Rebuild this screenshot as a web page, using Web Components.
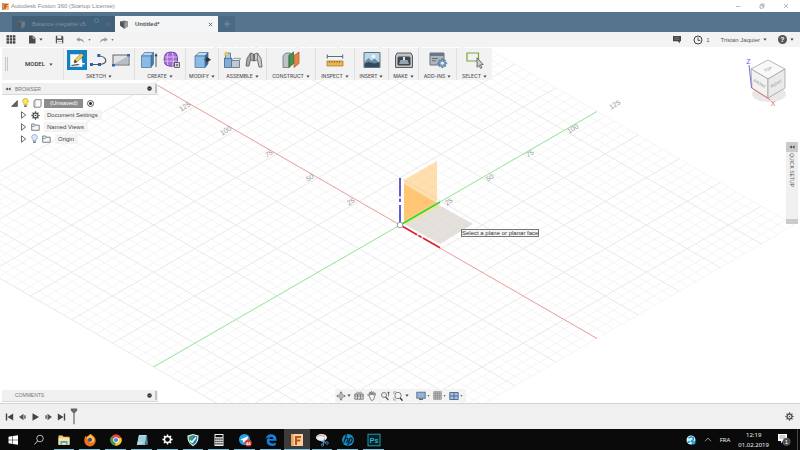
<!DOCTYPE html>
<html lang="en">
<head>
<meta charset="utf-8">
<title>Autodesk Fusion 360 (Startup License)</title>
<style>
  html, body { margin: 0; height: 100%; }
  body { font-family: "Liberation Sans", Arial, sans-serif; font-size: 6px; line-height: 8px; color: #444; background: #fff; }
</style>
</head>
<body>
<fusion-app></fusion-app>
<script>
const BASE = `
  :host { display: block; box-sizing: border-box; }
  *, *::before, *::after { box-sizing: border-box; }
  button { all: unset; box-sizing: border-box; display: inline-flex; align-items: center; justify-content: center; cursor: pointer; }
  ul { list-style: none; margin: 0; padding: 0; }
`;
function define(name, css, html, setup) {
  const template = document.createElement('template');
  template.innerHTML = `<style>${BASE}${css}</style>${html}`;
  customElements.define(name, class extends HTMLElement {
    constructor() {
      super();
      this.attachShadow({ mode: 'open' }).append(template.content.cloneNode(true));
    }
    connectedCallback() { if (setup) setup.call(this, this.shadowRoot); }
  });
}

/* name: [width, height, markup] */
const gearPath = (() => {
  let d = '';
  for (let i = 0; i < 16; i++) {
    const r = i % 2 ? 4 : 5.6;
    for (const o of [-0.13, 0.13]) {
      const a = i * Math.PI / 8 + o;
      d += (d ? 'L' : 'M') + (6 + r * Math.cos(a)).toFixed(2) + ' ' + (6 + r * Math.sin(a)).toFixed(2);
    }
  }
  return d + 'Z';
})();
const ICONS = {
  fusion: [8, 8, '<rect width="8" height="8" rx=".6" fill="#f7c08a"/><path d="M0 0h2v8H0z" fill="#d8833c"/><path d="M2.600 1.200h4v1.300H4.200v1.100h2v1.200h-2V7H2.600z" fill="#b4500c"/>'],
  caret: [4, 3, '<path d="M.4.4h3.200L2 2.800z" fill="#444"/>'],
  min: [6, 6, '<path d="M1 3.500h4" stroke="#999" stroke-width=".7"/>'],
  restore: [6, 6, '<path d="M1 2.200h3v3H1zM2 2.200V1h3v3H4" fill="none" stroke="#888" stroke-width=".6"/>'],
  close: [6, 6, '<path d="M1 1l4 4M5 1L1 5" stroke="#888" stroke-width=".6"/>'],
  tabclose: [6, 6, '<path d="M1 1l4 4M5 1L1 5" stroke="currentColor" stroke-width="1"/>'],
  plus: [6, 6, '<path d="M3 0v6M0 3h6" stroke="#7f93a4" stroke-width=".9"/>'],
  doc3d: [10, 9, '<path d="M1 1.500L5 .4l4 1v4.800L5.400 8.800 1 5.400z" fill="#777"/><path d="M1 1.500l4.400 1v6.200L1 5.500z" fill="#555"/><path d="M5.400 2.500L9 1.400v4.800L5.400 8.700z" fill="#999"/>'],
  grid: [10, 9, [0, 1, 2].flatMap(r => [0, 1, 2].map(c => `<rect x="${.5 + c * 3.200}" y="${.2 + r * 3}" width="2.500" height="2.400" fill="#444"/>`)).join('')],
  file: [8, 9, '<path d="M1 .5h4l2.500 2.700v5.300H1z" fill="#4a4a4a"/><path d="M5 .5v2.800h2.500" fill="none" stroke="#f3f3f3" stroke-width=".6"/>'],
  save: [9, 9, '<path d="M.8.8h6.600l.9.9v6.500H.8z" fill="#555"/><path d="M2.300.8h4v2.700h-4zM2 5h5v3.200H2z" fill="#f3f3f3"/><path d="M2.500 6.400h4" stroke="#555" stroke-width=".5"/>'],
  undo: [10, 7, '<path d="M0 2.800L3.800.2v1.700C7.400 1.900 9 3.600 9 6.600 7.800 4.700 6.300 4 3.800 4v1.500z" fill="#999"/>'],
  redo: [10, 7, '<path d="M10 2.800L6.200.2v1.700C2.600 1.900 1 3.600 1 6.600 2.200 4.700 3.700 4 6.200 4v1.500z" fill="#999"/>'],
  chat: [10, 9, '<path d="M1 1h8v5.300H7.800v2L5.700 6.300H1z" fill="#444"/><path d="M2.400 2.700h5M2.400 4.300h5" stroke="#999" stroke-width=".6"/>'],
  clock: [10, 10, '<circle cx="5" cy="5" r="4" fill="none" stroke="#444" stroke-width="1"/><path d="M5 2.500V5.400h2.300" fill="none" stroke="#444" stroke-width=".9"/>'],
  sketch: [20, 20, '<path d="M0 0h20v20H0z" fill="#0e82c2"/><path d="M3 4h12v13H3z" fill="#cfd4d8"/><path d="M4 5h10v11H4z" fill="#fafafa"/><path d="M4.500 15.500l8-1.200" stroke="#444" stroke-width="1.200"/><path d="M7 12.800l.9-3L14.300 3.300l2.400 2.200L10 12.100z" fill="#f4ce59" stroke="#6b5420" stroke-width=".5"/><path d="M7 12.800l.9-3 2.200 2.200z" fill="#333"/><path d="M14.500 10.500v6.400M11.300 13.700h6.400" stroke="#fff" stroke-width="1.500"/>'],
  spline: [20, 20, '<path d="M3 14.500h7.500C20 14 18 6.500 9.800 6" fill="none" stroke="#555" stroke-width="1.200"/><path d="M1 13h3v3H1zM9 13h3v3H9zM8.300 4h3v3h-3z" fill="#2d5fbd"/>'],
  rect: [20, 20, '<rect x="2" y="5" width="16" height="10" fill="#dfe2e6" stroke="#666"/><path d="M3 14h14V6z" fill="#b9bec4"/><path d="M1 14h3v2.500H1zM16 4h3v2.500h-3z" fill="#3868bd"/>'],
  extrude: [20, 20, '<path d="M2.500 6l3-3.500h9l-2.500 3.500z" fill="#b5d7f3" stroke="#436d9b" stroke-width=".7"/><path d="M12 6l2.500-3.500V14L12 17.500z" fill="#4579b2" stroke="#436d9b" stroke-width=".7"/><path d="M2.500 6H12v11.500H2.500z" fill="#8abbe7" stroke="#436d9b" stroke-width=".7"/><path d="M17 5v12" stroke="#555"/><path d="M15.400 6.300L17 3l1.600 3.300z" fill="#444"/>'],
  form: [20, 20, '<path d="M5 3.500C8 1.500 13 2 15 3.500c2 2.500 2 8 .5 11-3 2.500-8 2-11 0C2.500 11 3 6 5 3.500z" fill="#a570d6" stroke="#65349b"/><path d="M7 3c-1.300 4-1.200 8.500 0 12.500M11.500 2.500c1 4.500 1 9 0 13.500M3.500 7h13M3 11.200h13.500" stroke="#e5c9fb" stroke-width=".8" fill="none"/><path d="M13.500 12.500h5v5h-5z" fill="#eee" stroke="#444" stroke-width=".8"/><path d="M16 13.600v3M14.500 15h3" stroke="#333" stroke-width=".7"/>'],
  press: [20, 20, '<path d="M3 6l4-3.500h9L13 6z" fill="#c4dff5" stroke="#436d9b" stroke-width=".7"/><path d="M13 6l3-3.500V14L13 17.500z" fill="#3b6da6" stroke="#436d9b" stroke-width=".7"/><path d="M3 6h10v11.500H3z" fill="#8bbae5" stroke="#436d9b" stroke-width=".7"/><path d="M12 9.700h4M14.500 7.200L18.500 9.700l-4 2.500z" fill="#333" stroke="#333" stroke-width=".8"/>'],
  component: [20, 20, '<path d="M2.500 8h7v9.500h-7z" fill="#82addb" stroke="#41638c" stroke-width=".8"/><path d="M9.500 10.500h8v7h-8z" fill="#bec8d1" stroke="#5d6873" stroke-width=".8"/><path d="M9.500 10.500L11.500 8.300h7l-1 2.200z" fill="#e6ebef" stroke="#5d6873" stroke-width=".6"/><path d="M3.500 3h5v5.500h-5z" fill="#a6c9e9" stroke="#41638c" stroke-width=".7"/><path d="M4 .8l.8 1.900 2 .2-1.500 1.300.5 2L4 5.200l-1.800 1 .5-2L1.200 2.900l2-.2z" fill="#e9c64e"/>'],
  joint: [20, 20, '<path d="M3 8.500L6.500 3l3 1v7L6.500 9.800 5 16H2z" fill="#a8aaac" stroke="#555" stroke-width=".8"/><path d="M17 8.500L13.500 3l-3 1v7l3-1.200L15 17h3z" fill="#c8cacc" stroke="#555" stroke-width=".8"/><path d="M6.500 3v6.800M13.500 3v6.800" stroke="#666" stroke-width=".7"/>'],
  plane: [20, 20, '<path d="M2 5.500L5 3h4.500L8 5.500v12H2z" fill="#bcc3c8" stroke="#666" stroke-width=".7"/><path d="M8 5.500L12.500 2v11.500L8 17.500z" fill="#43944c" stroke="#2e6535" stroke-width=".7"/><path d="M13 5.500L18 2v11.500l-5 4z" fill="#e58449" stroke="#ad572a" stroke-width=".7"/>'],
  measure: [20, 20, '<path d="M2 6.500h16M2.300 4.600v3.800M17.700 4.600v3.800" stroke="#5b6e86" stroke-width="1.100"/><path d="M2 11h16v5H2z" fill="#eab54b" stroke="#a6752a" stroke-width=".7"/><path d="M4.500 11v2M7 11v2M9.500 11v2M12 11v2M14.500 11v2" stroke="#775116" stroke-width=".6"/>'],
  insert: [20, 20, '<path d="M2 2.500h16v15H2z" fill="#b9d7ed" stroke="#63707b"/><path d="M2.500 12l4-4 3 3 3-2.500 5 4.500v2h-15z" fill="#6b8ba1"/><path d="M2.500 13.500l4-1.500 6 1.500 5-1.500V17h-15z" fill="#2f4a5e"/><circle cx="11.500" cy="6.500" r="2" fill="#edf6fc"/>'],
  make: [20, 20, '<path d="M3 3h14l1.500 3v11.500h-17V6z" fill="#bfc3c6" stroke="#5b5f63"/><rect x="3.500" y="6.500" width="13" height="9" rx="1.500" fill="#41474c"/><path d="M5 14l1.500-4h7l1.500 4z" fill="#8fa5b5"/><path d="M9 7h2v2.500l-1 1.300-1-1.300z" fill="#e1e5e8"/>'],
  addins: [20, 20, '<path d="M2 3h14v12H2z" fill="#aeb6c0" stroke="#6a737f"/><path d="M2 3h14v3H2z" fill="#68778c"/><path d="M4 8.500h6M4 10.700h4" stroke="#535c68" stroke-width=".8"/><g transform="translate(9.500 8.500) scale(.8)"><path d="' + gearPath + '" fill="#7c9fc2" stroke="#3f5f80" stroke-width=".7"/><circle cx="6" cy="6" r="1.800" fill="#eef3f8"/></g>'],
  select: [20, 20, '<path d="M2 3h11.500v8H2z" fill="none" stroke="#7aa63a" stroke-width="1.200"/><path d="M12 7.800v9.400l2.100-1.800 1.400 3 1.500-.8-1.400-2.800 2.600-.3z" fill="#ccc" stroke="#555" stroke-width=".8"/>'],
  rewind: [7, 5, '<path d="M3.300.5v4L.3 2.500zM6.700.5v4L3.600 2.500z" fill="#444"/>'],
  collapse: [6, 6, '<circle cx="3" cy="3" r="2.700" fill="#333"/><path d="M1.700 3h2.600" stroke="#aaa" stroke-width=".7"/>'],
  open: [7, 7, '<path d="M6.400.6v5.800H.6z" fill="#666" stroke="#333" stroke-width=".6"/>'],
  shut: [7, 8, '<path d="M1.500.8v6.400l4.200-3.200z" fill="#fff" stroke="#444" stroke-width=".8"/>'],
  bulbOn: [7, 10, '<path d="M3.500.5a2.700 2.700 0 0 1 1.500 5V7H2V5.500a2.700 2.700 0 0 1 1.500-5z" fill="#ffe45c" stroke="#b1962a" stroke-width=".6"/><path d="M2.200 8.200h2.600" stroke="#555" stroke-width="1.400"/>'],
  bulbOff: [7, 10, '<path d="M3.500.5a2.700 2.700 0 0 1 1.500 5V7H2V5.500a2.700 2.700 0 0 1 1.500-5z" fill="#dce9fb" stroke="#6f8bbd" stroke-width=".6"/><path d="M2.200 8.200h2.600" stroke="#667" stroke-width="1.400"/>'],
  cube: [9, 9, '<path d="M1 2l1.200-1.300h6L8 7.200 7.300 8.200H1z" fill="#fbfbfb" stroke="#666" stroke-width=".8"/><path d="M2.200.7v6.800" stroke="#999" stroke-width=".6"/>'],
  folder: [9, 8, '<path d="M.7 7.300V1h2.800l.7 1.200h4v5.100z" fill="#f4f6f8" stroke="#586471" stroke-width=".8"/><path d="M.7 3.400h2.700l.8-1.200" fill="none" stroke="#586471" stroke-width=".6"/>'],
  gear: [12, 12, '<path d="' + gearPath + '" fill="#555"/><circle cx="6" cy="6" r="2.300" fill="#eee"/><circle cx="6" cy="6" r="1" fill="#555"/>'],
  gearWhite: [12, 12, '<path d="' + gearPath + '" fill="#fff"/><circle cx="6" cy="6" r="2.500" fill="#0a0a0a"/>'],
  orbit: [10, 10, '<path d="M5 .3L6.800 2.400H3.200zM5 9.700L6.800 7.600H3.200zM.3 5L2.400 3.200v3.600zM9.700 5L7.600 3.200v3.600z" fill="#777"/><circle cx="5" cy="5" r="2" fill="#f3f3f4" stroke="#666" stroke-width=".7"/><path d="M5 4v2M4 5h2" stroke="#777" stroke-width=".5"/>'],
  look: [10, 9, '<path d="M.8 3h8.400v5.200H.8z" fill="#ddd" stroke="#666" stroke-width=".8"/><path d="M2 2.500L3.500.8 5 2.500 6.500.8 8 2.500M1 5h8M3.500 3v5M6.500 3v5" fill="none" stroke="#666" stroke-width=".7"/>'],
  hand: [10, 10, '<path d="M2.800 6L1 4.200c-.7-.8.2-1.300.8-.8L3 4.500 2.500 1.700c0-.8 1-.8 1.100 0L4 3.800V1c.1-.7 1-.7 1.100 0v2.700L6 1.300c.2-.7 1.100-.4 1 .3l-.4 2.600 1-1.700c.4-.5 1.100-.1.900.5L7.200 6.600C7 8.500 6.400 9.400 5 9.400S3.500 8 2.800 6z" fill="#f6f6f6" stroke="#555" stroke-width=".7"/>'],
  zoom: [10, 10, '<circle cx="4" cy="4" r="2.500" fill="#eee" stroke="#666" stroke-width=".8"/><path d="M5.700 6l2.700 3" stroke="#555" stroke-width="1.200"/><path d="M8.500 1v4.500M7.400 2.200L8.500.8l1.100 1.400" stroke="#444" stroke-width=".7" fill="none"/>'],
  fit: [11, 10, '<circle cx="5" cy="4.500" r="3.200" fill="#f5f5f5" stroke="#666" stroke-width=".8"/><path d="M7.200 7l2.300 2.600" stroke="#333" stroke-width="1.400"/><path d="M.8 3V.8H3M.8 6.500V9H3" fill="none" stroke="#777" stroke-width=".6"/>'],
  display: [10, 10, '<rect x=".8" y="1.200" width="8.400" height="6" fill="#8fb5df" stroke="#5c6d80" stroke-width=".9"/><path d="M3.500 7.500h3l.7 1.500H2.800z" fill="#666"/>'],
  gridset: [10, 10, '<path d="M.8.800h8.400v8.400H.8z" fill="#ccc" stroke="#777" stroke-width=".7"/><path d="M.8 3h8.400M.8 5h8.400M.8 7h8.400M3 .8v8.400M5 .8v8.400M7 .8v8.400" stroke="#777" stroke-width=".6"/>'],
  views: [10, 10, '<path d="M.8 1.500h8.400v7H.8z" fill="#a5c1e5" stroke="#4a6389" stroke-width=".9"/><path d="M5 1.500v7M.8 5h8.400" stroke="#4a6389" stroke-width=".9"/>'],
  first: [9, 8, '<path d="M.8.5h1.400v7H.8zM8.200.5v7L2.500 4z" fill="#444"/>'],
  back: [9, 8, '<path d="M5.500.800v6.400L1 4z" fill="#555"/><path d="M6 2.200h1.800v3.600H6z" fill="#777"/>'],
  play: [9, 8, '<path d="M1.500.3v7.400L8 4z" fill="#444"/>'],
  forward: [9, 8, '<path d="M3.500.800v6.400L8 4z" fill="#555"/><path d="M1.200 2.200H3v3.600H1.200z" fill="#777"/>'],
  last: [9, 8, '<path d="M6.800.5h1.400v7H6.800zM.8.5v7L6.500 4z" fill="#444"/>'],
  marker: [8, 18, '<path d="M.8.5h6.400v2L4.600 5.300v11H3.400v-11L.8 2.500z" fill="#666"/>'],
  windows: [14, 14, '<path d="M2.500 3.700L6.500 3v3.700h-4zM7 2.900l5-.7v4.500H7zM2.500 7.200h4V11l-4-.7zM7 7.200h5v4.600l-5-.8z" fill="#fff"/>'],
  search: [14, 14, '<circle cx="8" cy="5.500" r="3.300" fill="none" stroke="#ddd" stroke-width=".8"/><path d="M5.600 8L2.500 11.500" stroke="#ddd" stroke-width=".9"/>'],
  explorer: [14, 14, '<path d="M1.500 2.500h4l1 1.300h6v8h-11z" fill="#f3ce68"/><path d="M1.500 5h11v6.800h-11z" fill="#fbe79b"/><path d="M3.500 8h7v3.800H9.200V9.700H4.800v2.100H3.500z" fill="#3b9ed8"/>'],
  firefox: [14, 14, '<circle cx="7" cy="7.300" r="5" fill="#31499c"/><path d="M2.400 2.800l1 1.500C4.500 3 7 1 8.300 1c0 1.500 4.700 2.300 4.400 6.800a5.700 5.700 0 0 1-11.400 0c0-2 .4-3.500 1.100-5z" fill="#f07022"/><path d="M7.600 1c0 2 4.200 3 3.800 6.200-.4 2.400-3.600 3.300-5.600 1.800l2.800-.7L5 6.800 3.500 4.600C5 4 6.500 3 7.600 1z" fill="#ffca36"/><circle cx="7" cy="6.800" r="2" fill="#364aa0"/>'],
  chrome: [14, 14, '<circle cx="7" cy="7" r="5.700" fill="#e04839"/><path d="M7 7L2 4.200a5.700 5.700 0 0 0 4.200 8.400z" fill="#34a055"/><path d="M7 7l-.8 5.600A5.700 5.700 0 0 0 12.300 5H7z" fill="#fccb39"/><circle cx="7" cy="7" r="2.800" fill="#fff"/><circle cx="7" cy="7" r="2.100" fill="#4585e5"/>'],
  notepad: [14, 14, '<path d="M4 2h8l-2 10H2z" fill="#8bc9da"/><path d="M4 2h7L8.300 10 2 12z" fill="#b5e1ea"/><path d="M3.700 4h7M3.300 6h6.500M3 8h6" stroke="#5f9db1" stroke-width=".5"/><path d="M12 2l1 9.500-3 .5z" fill="#577d8b"/>'],
  shield: [14, 14, '<path d="M7 1l5.500 1.600C12.700 8 11 11.200 7 13.200 3 11.200 1.300 8 1.500 2.600z" fill="#e7f4ef"/><path d="M7 2v10C4 10.500 2.500 8 2.600 3.400z" fill="#3b9b78"/><path d="M7 2l4.400 1.400C11.500 8 10 10.500 7 12z" fill="#2d83b0"/><path d="M4 7.500l2 1.700L10 4.500" stroke="#fff" stroke-width="1.400" fill="none"/>'],
  calc: [14, 14, '<path d="M2.500 1h9v12h-9z" fill="#eee"/><path d="M3.500 2h7v2.200h-7z" fill="#111"/>' + [0, 1, 2].flatMap(r => [0, 1, 2, 3].map(c => `<rect x="${3.3 + c * 2}" y="${5.3 + r * 2.400}" width="1.300" height="1.500" fill="#222"/>`)).join('')],
  telegram: [14, 14, '<circle cx="6.500" cy="6.500" r="5.500" fill="#2b9fd9"/><path d="M2.500 6.500L10 3.300 8.700 10 6.500 8.400 5.200 9.700 5 7.500z" fill="#fff"/><circle cx="10.200" cy="10" r="3.500" fill="#d93931"/><text x="10.200" y="11.500" font-size="4" font-weight="700" text-anchor="middle" fill="#fff">44</text>'],
  edge: [14, 14, '<path d="M1.500 6.500C2 2.800 4.500 1.200 7.300 1.200c3.700 0 5.500 2.800 5.200 6.600H5.200c.2 3 4.400 3.200 6.600 1.600V12c-4 2-9 .8-9-4 0-2 1-3.500 2.800-4.300C3.500 4 2.300 5.200 1.500 6.500zM5.300 5.900h4C9.200 3.500 5.700 3.300 5.300 5.900z" fill="#1381dd"/>'],
  fusionBig: [14, 14, '<path d="M1 1h12v12H1z" fill="#f9cfa0"/><path d="M1 1h2.500v12H1z" fill="#eba562"/><path d="M5 3h6v2H7v1.500h3.300v1.900H7V12H5z" fill="#b9560f"/>'],
  snip: [14, 14, '<ellipse cx="6.500" cy="4.500" rx="5.500" ry="3.500" fill="#eee"/><path d="M2 4c2-2 5-2 8 0" stroke="#d84a4a" stroke-width=".6" fill="none"/><path d="M6 8l5 1.500M9.500 5.500L8 12" stroke="#5ea6d8" stroke-width="1"/><circle cx="12" cy="10" r="1.300" fill="none" stroke="#4b8dc5" stroke-width=".8"/><circle cx="7.500" cy="12" r="1.200" fill="none" stroke="#4b8dc5" stroke-width=".8"/>'],
  hp: [14, 14, '<circle cx="7" cy="7" r="6" fill="#168cc5"/><path d="M5.700 1.200L2.800 9.700M4.400 6c2-1.500 2.800-.5 2.300 1L5.500 10M9 5L6.700 12.700M8.600 5.500c2.500-1 3 .2 2.300 2.200-.7 2-1.800 2.600-3.300 2" stroke="#0a1a24" stroke-width="1.200" fill="none"/>'],
  photoshop: [14, 14, '<rect x="1" y="1.200" width="12" height="11.600" fill="#06222c" stroke="#2499a6" stroke-width="1"/><text x="7" y="9.500" font-size="7" font-weight="700" text-anchor="middle" fill="#2eb4c2">Ps</text>'],
  assist: [10, 10, '<circle cx="5" cy="5" r="4.500" fill="#d7f0fb"/><path d="M2.500 3.200c1.500-2 5-1.500 5 .5S5.200 5.200 5 7" stroke="#1d93cf" stroke-width="1.500" fill="none"/><circle cx="7.500" cy="7.500" r="2" fill="#2aa6df"/><circle cx="2.700" cy="7" r="1.200" fill="#2aa6df"/>'],
  up: [8, 5, '<path d="M1 4.300L4 1l3 3.300" fill="none" stroke="#ccc" stroke-width=".7"/>'],
  notify: [14, 13, '<path d="M1 1h9v7H6L4 10.200V8H1z" fill="#fff"/><path d="M2.500 3h6M2.500 5h6" stroke="#555" stroke-width=".6"/><circle cx="9.500" cy="8.700" r="3.800" fill="#4a4a4a" stroke="#888" stroke-width=".4"/><text x="9.500" y="10.700" font-size="6" text-anchor="middle" fill="#fff">1</text>']
};
class UiIcon extends HTMLElement {
  constructor() { super(); this.attachShadow({ mode: 'open' }); }
  connectedCallback() {
    const [w, h, body] = ICONS[this.getAttribute('name')];
    const size = this.getAttribute('size') || w;
    this.shadowRoot.innerHTML = `<style>:host{display:block;flex:none}svg{display:block}text{font-family:"Liberation Sans",sans-serif}</style>
      <svg width="${size}" height="${Math.round(h * size / w)}" viewBox="0 0 ${w} ${h}" aria-hidden="true">${body}</svg>`;
  }
}
customElements.define('ui-icon', UiIcon);
const icon = (name, size) => `<ui-icon name="${name}"${size ? ` size="${size}"` : ''}></ui-icon>`;

define('title-bar', `
  :host { display: flex; align-items: center; height: 12px; padding: 0 11px 0 2px; gap: 2px; color: #8a8a8a; background: #fff; }
  .title { flex: 1; }
  nav { display: flex; gap: 18px; }
`, `${icon('fusion', 7)}<span class="title"><slot></slot></span>
  <nav><button aria-label="Minimize">${icon('min')}</button><button aria-label="Restore">${icon('restore')}</button><button aria-label="Close">${icon('close')}</button></nav>`);

define('doc-tab', `
  :host { display: flex; align-items: center; gap: 6px; height: 16px; width: 103px; padding: 0 5px 0 4px; background: #436079; color: #7d909f; }
  :host([selected]) { background: #f4f5f6; color: #555; font-weight: 700; }
  .name { flex: 1; }
  .dot { width: 5px; height: 5px; border: 1px solid #3a93a5; border-radius: 50%; align-self: flex-start; margin-top: 2px; }
  :host([selected]) .dot { display: none; }
  :host(:not([selected])) ui-icon { opacity: .5; }
`, `${icon('doc3d')}<span class="name"><slot></slot></span><span class="dot"></span><button aria-label="Close tab">${icon('tabclose', 5)}</button>`);

define('tab-strip', `
  :host { display: flex; align-items: flex-end; height: 20px; padding-left: 12px; background: #55748e; }
  .add { width: 17px; height: 16px; background: #4b6a83; }
`, `<slot></slot><button class="add" aria-label="New tab">${icon('plus')}</button>`);

define('quick-bar', `
  :host { display: flex; align-items: center; height: 15px; padding: 0 6px; background: #f3f3f4; color: #555; }
  button { gap: 3px; }
  .left, .right, .history { display: flex; align-items: center; }
  .left { flex: 1; gap: 12px; }
  .history { gap: 8px; }
  .right { gap: 11px; }
`, `<div class="left"><button aria-label="Data panel">${icon('grid')}</button>
  <button aria-label="File">${icon('file')}${icon('caret')}</button>
  <button aria-label="Save">${icon('save')}</button>
  <div class="history"><button aria-label="Undo">${icon('undo', 9)}${icon('caret', 3)}</button>
  <button aria-label="Redo">${icon('redo', 9)}${icon('caret', 3)}</button></div></div>
  <div class="right"><button aria-label="Comments">${icon('chat')}</button>
  <button aria-label="Job status">${icon('clock')}<span>1</span></button>
  <button>Tristan Jaquier ${icon('caret')}</button>
  <button aria-label="Help"><help-mark></help-mark>${icon('caret', 4)}</button></div>`);

define('help-mark', `
  :host { width: 9px; height: 9px; border-radius: 50%; background: #555; color: #fff; font: 700 7px/9px "Liberation Sans", sans-serif; text-align: center; }
`, `?`);

define('tool-group', `
  :host { display: flex; flex-direction: column; align-items: center; border-left: 1px solid #e0e0e1; padding-top: 2px; }
  .tools { display: flex; gap: 2px; height: 20px; align-items: center; }
  .label { gap: 2px; font: 500 5px/8px Inter, "Liberation Sans", sans-serif; color: #555; margin-top: 2px; white-space: nowrap; }
`, `<div class="tools"></div><button class="label"><slot></slot>${icon('caret', 4)}</button>`, function (root) {
  root.querySelector('.tools').innerHTML = this.getAttribute('tools').split(' ')
    .map(n => `<button aria-label="${n}">${icon(n, 20)}</button>`).join('');
});

define('tool-ribbon', `
  :host { display: grid; grid-template-columns: 61px 71px 51px 33px 48px 49px 39px 34px 30px 38px 36px; width: max-content; height: 32px; background: #f2f2f3; position: relative; }
  .mode { display: flex; align-items: center; gap: 17px; padding-left: 3px; }
  .grip { width: 3px; height: 14px; border: solid #c6c6c8; border-width: 0 1px; }
  button { gap: 4px; font: 500 6px/8px Roboto, "Liberation Sans", sans-serif; color: #333; }
`, `<div class="mode"><span class="grip"></span><button>MODEL ${icon('caret', 4)}</button></div>
  <tool-group tools="sketch spline rect">SKETCH</tool-group>
  <tool-group tools="extrude form">CREATE</tool-group>
  <tool-group tools="press">MODIFY</tool-group>
  <tool-group tools="component joint">ASSEMBLE</tool-group>
  <tool-group tools="plane">CONSTRUCT</tool-group>
  <tool-group tools="measure">INSPECT</tool-group>
  <tool-group tools="insert">INSERT</tool-group>
  <tool-group tools="make">MAKE</tool-group>
  <tool-group tools="addins">ADD-INS</tool-group>
  <tool-group tools="select">SELECT</tool-group>`);

define('panel-header', `
  :host { display: flex; align-items: center; gap: 3px; width: 156px; height: 12px; padding: 0 1px 0 3px; background: #f0f0f1; border-bottom: 1px solid #d8d8d9; color: #777; font: 5px/8px "Liberation Sans", sans-serif; position: relative; }
  .lead { width: 7px; }
  :host(:not([rewind])) .lead ui-icon { display: none; }
  .name { flex: 1; }
  .grip { width: 2px; height: 9px; background: #c4c4c6; }
`, `<span class="lead">${icon('rewind', 6)}</span><span class="name"><slot></slot></span><button aria-label="Collapse">${icon('collapse', 5)}</button><span class="grip"></span>`);

define('tree-item', `
  :host { display: flex; align-items: center; gap: 4px; height: 12px; width: max-content; padding-left: 18px; }
  :host([root]) { padding-left: 9px; }
  .icons { display: flex; align-items: center; gap: 4px; }
  .text { padding: 0 4px 0 3px; line-height: 10px; background: #f4f4f5; color: #444; }
  :host([root]) .text { background: #8c8c8d; color: #fff; padding: 0 5px 0 6px; line-height: 9px; margin-left: -2px; }
  .radio { display: none; width: 7px; height: 7px; border: 1px solid #555; border-radius: 50%; background: radial-gradient(#333 1px, #fff 2px); }
  :host([root]) .radio { display: block; }
`, `<button class="toggle" aria-label="Expand"></button><span class="icons"></span><span class="text"><slot></slot></span><span class="radio"></span>`, function (root) {
  root.querySelector('.toggle').innerHTML = icon(this.hasAttribute('root') ? 'open' : 'shut', 7);
  root.querySelector('.icons').innerHTML = this.getAttribute('icons').split(' ').map(n => icon(n, n === 'gear' ? 9 : 0)).join('');
});

define('model-grid', `
  :host { position: absolute; inset: 0; overflow: hidden; }
  svg { display: block; width: 100%; height: 100%; }
  text { font: 7px "Liberation Sans", sans-serif; fill: #999; text-anchor: middle; }
`, `<svg viewBox="0 47 800 356" preserveAspectRatio="xMidYMid slice" role="img" aria-label="Origin planes and axes"></svg>`, function (root) {
  const K = 1.642, S = 0.576, LO = -150, HI = 120;
  const at = (a, b) => `${(400 + (a + b) * K).toFixed(1)} ${(225 + (a - b) * K * S).toFixed(1)}`;
  let minor = '', major = '';
  for (let v = LO; v <= HI; v += 5) {
    const d = `M${at(v, LO)}L${at(v, HI)}M${at(LO, v)}L${at(HI, v)}`;
    if (v % 25) minor += d; else major += d;
  }
  const label = (x, y, n) => `<text transform="translate(${x} ${y}) rotate(-30)" y="2">${n}</text>`;
  root.querySelector('svg').innerHTML = `
    <g fill="none"><path d="${minor}" stroke="#f2f2f2" stroke-width=".8"/><path d="${major}" stroke="#e6e6e6" stroke-width=".9"/>
    <path d="M${at(LO, 0)}L${at(HI, 0)}" stroke="#f0a0a0"/><path d="M${at(0, LO)}L${at(0, HI)}" stroke="#95ea9b"/></g>
    <path d="M404 224l34-19.500 35 19.500-33 20z" fill="#d8d4ce" fill-opacity=".7"/>
    <path d="M404 180l33-19v41l-33 19z" fill="#ffc46a" fill-opacity=".55"/>
    <path d="M404 184l33 19-33 19z" fill="#ffb347" fill-opacity=".55"/>
    <path d="M404 222l33-19 2 3-32 18z" fill="#fbe66a" fill-opacity=".7"/>
    <path d="M400 178v18.500M400 198.500v3.500M400 205v17" stroke="#5f5cd6" stroke-width="2"/>
    <path d="M402 224l38-22" stroke="#2fd43a" stroke-width="1.600"/>
    <path d="M402 226l15 8.700M418.500 235.500l3 1.700M423 238l17 9.800" stroke="#dc2637" stroke-width="1.600"/>
    <circle cx="400" cy="225" r="2.800" fill="#fff" stroke="#999"/>
    ${label(351, 202, 25)}${label(310, 178, 50)}${label(269, 154, 75)}${label(226, 131, 100)}${label(185, 107, 125)}
    ${label(449, 202, 25)}${label(490, 178, 50)}${label(530, 154, 75)}${label(573, 129, 100)}${label(615, 105, 125)}`;
});

define('view-cube', `
  :host { position: absolute; top: 9px; right: 10px; width: 46px; height: 54px; }
  text { font-family: "Liberation Sans", sans-serif; font-size: 4px; fill: #888; text-anchor: middle; }
`, `<svg width="46" height="54" viewBox="0 0 46 54" role="img" aria-label="View cube">
  <ellipse cx="25" cy="38" rx="17" ry="8" fill="#e8e8e8"/>
  <path d="M7 13l17-9 17 9-17 10z" fill="#f8f8f8" stroke="#999" stroke-width=".7"/>
  <path d="M7 13l17 10v19L8 32z" fill="#f2f2f2" stroke="#999" stroke-width=".7"/>
  <path d="M24 23l17-10v19l-17 10z" fill="#eaeaea" stroke="#999" stroke-width=".7"/>
  <text transform="translate(24.500 14.500) rotate(-25)">TOP</text>
  <text transform="translate(15 29) rotate(30)">FRONT</text>
  <text transform="translate(33 29) rotate(-30)">RIGHT</text>
  <path d="M5 9l2.500 23" stroke="#5c5ce0" stroke-width=".9"/>
  <path d="M7.500 32l19 12" stroke="#e46b6b" stroke-width=".9"/>
  <text x="4.500" y="7.500" style="font-size:7px;fill:#5b5be6">Z</text>
  <text x="29" y="50" style="font-size:7px;fill:#f25b5b">X</text></svg>`);

define('quick-setup', `
  :host { position: absolute; top: 95px; right: 2px; width: 12px; height: 82px; display: flex; flex-direction: column; align-items: center; gap: 1px; background: #f0f0f1; }
  .head { width: 100%; height: 10px; background: #cbcbcc; }
  .text { flex: 1; writing-mode: vertical-rl; font: 5px/12px "Liberation Sans", sans-serif; color: #555; }
  .foot { width: 100%; height: 5px; background: #cbcbcc; }
`, `<button class="head" aria-label="Open quick setup">${icon('rewind', 6)}</button><span class="text">QUICK SETUP</span><span class="foot"></span>`);

define('hint-tip', `
  :host { position: absolute; left: calc(50% + 61px); top: calc(50% + 4px); padding: 0; border: 1px solid #777; background: #f6f6f8; color: #333; line-height: 6px; white-space: nowrap; }
`, `<slot></slot>`);

define('nav-bar', `
  :host { display: flex; align-items: center; gap: 3px; height: 13px; padding: 0 3px 0 1px; background: #f3f3f4; position: relative; }
  button { gap: 1px; }
  .wide { margin-left: 4px; }
`, `<button aria-label="Orbit">${icon('orbit')}${icon('caret', 4)}</button><button aria-label="Look at">${icon('look', 10)}</button><button aria-label="Pan">${icon('hand')}</button><button aria-label="Zoom">${icon('zoom')}</button><button aria-label="Fit">${icon('fit', 11)}${icon('caret', 4)}</button>
  <button class="wide" aria-label="Display settings">${icon('display', 10)}${icon('caret', 3)}</button><button aria-label="Grid settings">${icon('gridset', 9)}${icon('caret', 3)}</button><button aria-label="Viewports">${icon('views', 10)}${icon('caret', 3)}</button>`);

define('model-view', `
  :host { flex: 1; position: relative; display: flex; flex-direction: column; padding: 1px 2px 1px; min-height: 0; background: #fff; }
  .browser { position: relative; margin-top: 3px; }
  .tree { padding-top: 2px; }
  .spacer { flex: 1; }
  .bottom { display: grid; grid-template-columns: 1fr auto 1fr; align-items: center; }
`, `<model-grid></model-grid>
  <tool-ribbon></tool-ribbon>
  <div class="browser"><panel-header rewind>BROWSER</panel-header>
    <div class="tree"><tree-item root icons="bulbOn cube">(Unsaved)</tree-item>
    <tree-item icons="gear">Document Settings</tree-item>
    <tree-item icons="folder">Named Views</tree-item>
    <tree-item icons="bulbOff folder">Origin</tree-item></div></div>
  <div class="spacer"></div>
  <div class="bottom"><panel-header>COMMENTS</panel-header><nav-bar></nav-bar></div>
  <view-cube></view-cube><quick-setup></quick-setup>
  <hint-tip>Select a plane or planar face</hint-tip>`);

define('time-line', `
  :host { display: flex; align-items: center; gap: 4px; height: 26px; padding: 0 6px 0 5px; background: #f0f0f1; border-top: 1px solid #d4d4d5; }
  .set { margin-left: auto; }
`, `${[['first', 'Go to start'], ['back', 'Step back'], ['play', 'Play'], ['forward', 'Step forward'], ['last', 'Go to end']]
    .map(([n, l]) => `<button aria-label="${l}">${icon(n)}</button>`).join('')}
  <span class="mark">${icon('marker')}</span><button class="set" aria-label="Timeline settings">${icon('gear', 9)}</button>`);

define('task-bar', `
  :host { display: flex; justify-content: space-between; height: 21px; background: #0a0a0a; color: #eee; font: 6px/10px "Noto Sans", sans-serif; }
  ul { display: grid; grid-template-columns: repeat(15, 1fr); width: 387px; }
  li { display: flex; justify-content: center; position: relative; }
  li button { flex: 1; }
  li.run::after { content: ""; position: absolute; left: 2px; right: 3px; bottom: 0; height: 1px; background: #7cc4dd; }
  li.on { background: #3b3b3b; }
  li.on::after { left: 0; right: 0; }
  .tray { display: flex; align-items: center; gap: 8px; padding-right: 2px; }
  .time { text-align: center; }
  .end { border-left: 1px solid #444; align-self: stretch; margin-left: -2px; }
`, `<ul>${['windows', 'search', 'explorer', 'firefox', 'chrome', 'notepad', 'gearWhite', 'shield', 'calc', 'telegram', 'edge', 'fusionBig', 'snip', 'hp', 'photoshop']
    .map((n, i) => `<li class="${i > 1 ? 'run' : ''}${n === 'fusionBig' ? ' on' : ''}"><button aria-label="${n}">${icon(n, n === 'gearWhite' ? 11 : 14)}</button></li>`).join('')}</ul>
  <div class="tray">${icon('assist')}${icon('up')}<span>FRA</span><span class="time">12:19<br>01.02.2019</span>${icon('notify', 14)}<span class="end"></span></div>`);

define('fusion-app', `
  :host { display: flex; flex-direction: column; height: 100vh; min-height: 400px; overflow: hidden; }
`, `<title-bar>Autodesk Fusion 360 (Startup License)</title-bar>
  <tab-strip><doc-tab>Balance inégalité v5</doc-tab><doc-tab selected>Untitled*</doc-tab></tab-strip>
  <quick-bar></quick-bar>
  <model-view></model-view>
  <time-line></time-line>
  <task-bar></task-bar>`);
</script>
</body>
</html>
